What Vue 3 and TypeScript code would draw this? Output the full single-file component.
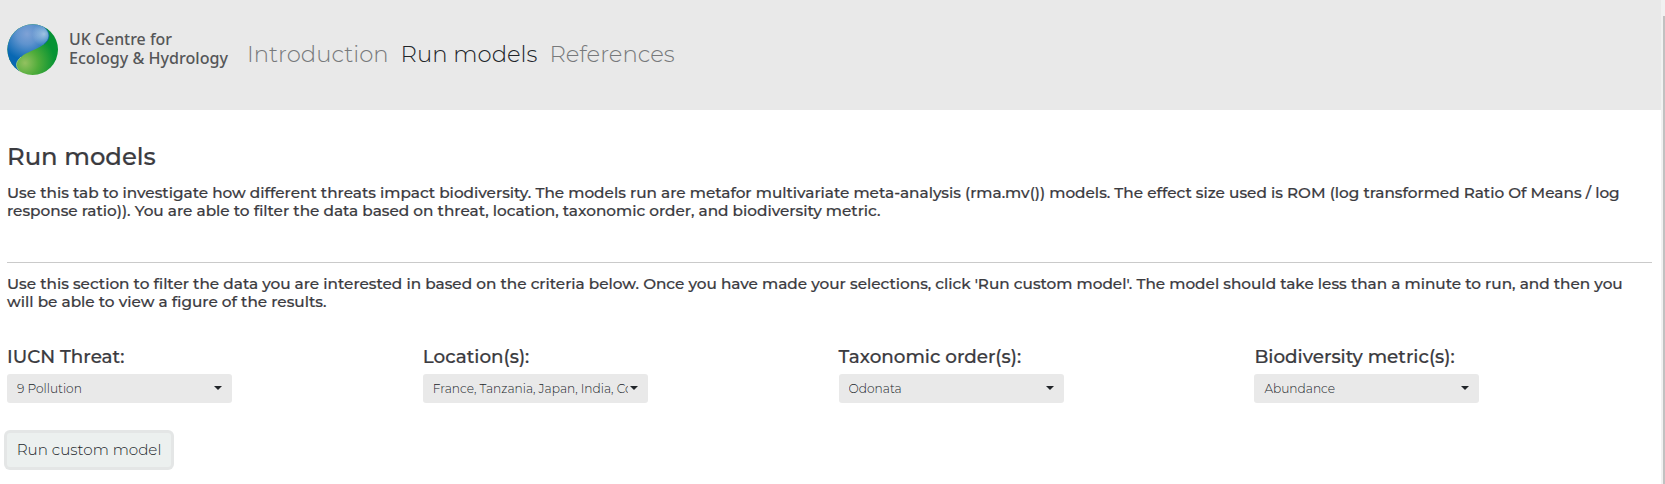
<script setup lang="ts">
interface Filter {
  label: string
  value: string
}

const tabs: string[] = ['Introduction', 'Run models', 'References']
const activeTab = 'Run models'

const filters: Filter[] = [
  { label: 'IUCN Threat:', value: '9 Pollution' },
  { label: 'Location(s):', value: 'France, Tanzania, Japan, India, Costa Rica' },
  { label: 'Taxonomic order(s):', value: 'Odonata' },
  { label: 'Biodiversity metric(s):', value: 'Abundance' },
]
</script>

<template>
  <div class="page">
    <div class="view">
      <header class="navbar">
        <svg class="logo" width="226" height="60" viewBox="0 0 226 60" role="img" aria-label="UK Centre for Ecology &amp; Hydrology">
          <defs>
            <clipPath id="globe"><circle cx="25.7" cy="28.6" r="25.3" /></clipPath>
            <radialGradient id="sky" gradientUnits="userSpaceOnUse" cx="20" cy="13" r="26">
              <stop offset="0" stop-color="#7fa2d6" />
              <stop offset="0.4" stop-color="#5f93ce" />
              <stop offset="1" stop-color="#0868b3" />
            </radialGradient>
            <radialGradient id="shine" gradientUnits="userSpaceOnUse" cx="37" cy="13" r="12">
              <stop offset="0" stop-color="#c0d9ee" stop-opacity="0.75" />
              <stop offset="1" stop-color="#c0d9ee" stop-opacity="0" />
            </radialGradient>
            <radialGradient id="land" gradientUnits="userSpaceOnUse" cx="18" cy="42" r="30">
              <stop offset="0" stop-color="#93c160" />
              <stop offset="0.45" stop-color="#4fac3a" />
              <stop offset="1" stop-color="#069334" />
            </radialGradient>
          </defs>
          <g clip-path="url(#globe)">
            <rect width="52" height="56" fill="url(#land)" />
            <path d="M38 6.8 C43.5 12 43.5 18 37 23.3 C29 29.5 20 30.5 14 36 C8.5 41 8 45 12.5 50 L4 56 H-2 V0 H36Z" fill="url(#sky)" />
            <path d="M36 4 L38 6.8 C43.5 12 43.5 18 37 23.3 C31 28 26 28 22 28 L20 4Z" fill="url(#shine)" />
            <path d="M38 6.8 C43.5 12 43.5 18 37 23.3" fill="none" stroke="#04649c" stroke-width="0.7" />
            <path d="M14 36 C8.5 41 8 45 12.5 50" fill="none" stroke="#b5dc9a" stroke-width="0.6" />
          </g>
          <text x="62" y="24" textLength="103" lengthAdjust="spacingAndGlyphs">UK Centre for</text>
          <text x="62" y="43" textLength="159" lengthAdjust="spacingAndGlyphs">Ecology &amp; Hydrology</text>
        </svg>
        <nav class="tabs">
          <a v-for="tab in tabs" :key="tab" class="tab" :class="{ active: tab === activeTab }">{{ tab }}</a>
        </nav>
      </header>

      <main class="content">
        <h2>Run models</h2>
        <p>
          Use this tab to investigate how different threats impact biodiversity. The models run are metafor multivariate meta-analysis (rma.mv()) models. The effect size used is ROM (log transformed Ratio Of Means / log<br />
          response ratio)). You are able to filter the data based on threat, location, taxonomic order, and biodiversity metric.
        </p>
        <hr />
        <p>
          Use this section to filter the data you are interested in based on the criteria below. Once you have made your selections, click 'Run custom model'. The model should take less than a minute to run, and then you<br />
          will be able to view a figure of the results.
        </p>

        <div class="filters">
          <div v-for="f in filters" :key="f.label" class="filter">
            <h4>{{ f.label }}</h4>
            <div class="picker" role="button">
              <span class="value">{{ f.value }}</span>
              <svg class="caret" width="8" height="4" viewBox="0 0 8 4"><path d="M0 0H8L4 4Z" fill="#212529" /></svg>
            </div>
          </div>
        </div>

        <button class="run" type="button">Run custom model</button>
      </main>
    </div>
    <div class="scrollbar"><div class="thumb"></div></div>
  </div>
</template>

<style scoped>
.page {
  display: flex;
  height: 484px;
  overflow: hidden;
  background: #fff;
  color: #3b3b3f;
  font-family: Montserrat, Inter, "Open Sans", sans-serif;
}
.view {
  flex: 1;
  min-width: 0;
}
.navbar {
  display: flex;
  align-items: flex-start;
  height: 110px;
  box-sizing: border-box;
  padding: 21px 7px 0;
  background: #e9e9e9;
}
.logo {
  flex: none;
}
.logo text {
  font: 550 17px "Noto Sans", "Open Sans", sans-serif;
  fill: #555658;
}
.tabs {
  display: flex;
  gap: 12px;
  padding: 19px 0 0 14px;
}
.tab {
  font-size: 22.75px;
  font-weight: 300;
  line-height: 28px;
  color: #77797b;
  white-space: nowrap;
}
.tab.active {
  color: #212529;
}
.content {
  padding: 32px 9px 0 7px;
}
h2,
h4,
p {
  -webkit-text-stroke: 0.2px currentColor;
}
h2 {
  margin: 0;
  font-size: 24.3px;
  font-weight: 500;
  line-height: 29px;
}
p {
  margin: 0;
  font-size: 15.29px;
  font-weight: 500;
  line-height: 18px;
  white-space: nowrap;
}
h2 + p {
  margin-top: 13px;
}
hr {
  margin: 42px 0 12px;
  border: 0;
  border-top: 1px solid #cacaca;
}
.filters {
  display: grid;
  grid-template-columns: repeat(4, 415.8px);
  margin-top: 35px;
}
h4 {
  margin: 0 0 6px;
  font-size: 18.35px;
  font-weight: 500;
  line-height: 22px;
  white-space: nowrap;
}
.picker {
  display: flex;
  align-items: center;
  width: 225px;
  height: 29px;
  box-sizing: border-box;
  padding: 0 10px;
  border-radius: 3px;
  background: #e9e9e9;
}
.value {
  flex: 1;
  min-width: 0;
  margin-right: 2px;
  overflow: hidden;
  font-size: 12.2px;
  font-weight: 300;
  line-height: 19px;
  white-space: nowrap;
  color: #212529;
}
.caret {
  flex: none;
  margin-top: -2px;
}
.run {
  display: block;
  margin: 30px 0 0;
  width: 164px;
  height: 34px;
  padding: 0 0 1px;
  border: 0;
  border-radius: 3px;
  background: #ecf0ef;
  box-shadow: 0 0 0 3px #e4e6e6;
  color: #212529;
  font: 300 15.15px Montserrat, Inter, "Open Sans", sans-serif;
}
.scrollbar {
  width: 4px;
  padding: 16px 0 0 2px;
  box-sizing: border-box;
  background: #f1f1f1;
}
.thumb {
  height: 468px;
  background: #c1c1c1;
}
</style>
